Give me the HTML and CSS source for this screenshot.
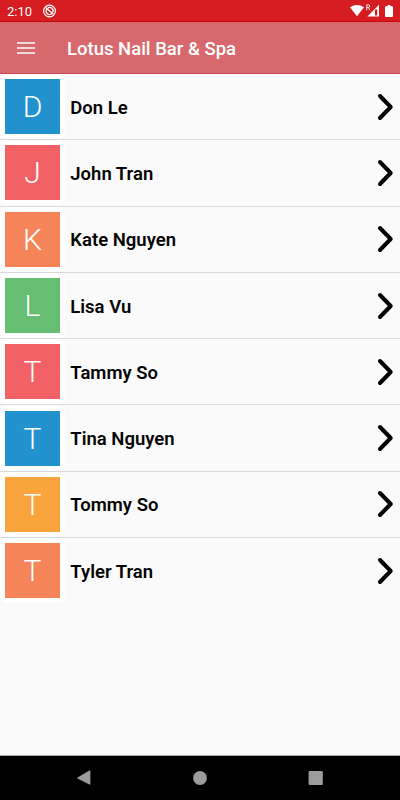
FILE: index.html
```html
<!DOCTYPE html>
<html lang="en">
<head>
<meta charset="utf-8">
<title>Lotus Nail Bar &amp; Spa</title>
<link rel="stylesheet" href="styles.css">
</head>
<body>
<div class="screen">
  <div class="status">
    <span class="time">2:10</span>
    <svg class="dnd" width="14" height="14" viewBox="0 0 14 14" fill="none" stroke="#fff">
      <circle cx="6.5" cy="7" r="5.9" stroke-width="1.2"/>
      <path d="M4 5A3.3 3.3 0 1 0 9 9.3M4.6 4.4A3.2 3.2 0 0 1 9.4 8.6" stroke-width="1.3"/>
      <path d="M2.6 3.4 10.4 10.2" stroke-width="1.3"/>
    </svg>
    <svg class="signals" width="44" height="16" viewBox="0 0 44 16" fill="#fff">
      <path d="M0 3.2Q7 -1.2 14 3.2L7 12.2Z"/>
      <path d="M16.8 6.2V.8H18.4Q19.7 .8 19.7 2.1T18.4 3.4H16.8M18.3 3.4 19.8 6.2" fill="none" stroke="#fff" stroke-width=".9"/>
      <path d="M29 .8V12.4H17.4Z"/>
      <path d="M25 5.4H26.1V11.4H25ZM26.1 5.4H27.2V11.4H26.1Z" fill="#d31b20"/>
      <path d="M37.5 1H40.5V2.2H42Q43 2.2 43 3.2V12Q43 13 42 13H36Q35 13 35 12V3.2Q35 2.2 36 2.2H37.5Z"/>
    </svg>
  </div>
  <header class="appbar">
    <svg class="menu" width="18" height="12" viewBox="0 0 18 12" stroke="#fff" stroke-width="1.6"><path d="M0 1H18M0 6H18M0 11H18"/></svg>
    <h1 class="title">Lotus Nail Bar &amp; Spa</h1>
  </header>
  <ul class="list">
    <li class="row"><span class="frame"><b class="tile blue">D</b></span><span class="name">Don Le</span><svg class="chev" viewBox="0 0 18 28"><path d="M4 3 14.7 14 4 25"/></svg></li>
    <li class="row"><span class="frame"><b class="tile red">J</b></span><span class="name">John Tran</span><svg class="chev" viewBox="0 0 18 28"><path d="M4 3 14.7 14 4 25"/></svg></li>
    <li class="row"><span class="frame"><b class="tile coral">K</b></span><span class="name">Kate Nguyen</span><svg class="chev" viewBox="0 0 18 28"><path d="M4 3 14.7 14 4 25"/></svg></li>
    <li class="row"><span class="frame"><b class="tile green">L</b></span><span class="name">Lisa Vu</span><svg class="chev" viewBox="0 0 18 28"><path d="M4 3 14.7 14 4 25"/></svg></li>
    <li class="row"><span class="frame"><b class="tile red">T</b></span><span class="name">Tammy So</span><svg class="chev" viewBox="0 0 18 28"><path d="M4 3 14.7 14 4 25"/></svg></li>
    <li class="row"><span class="frame"><b class="tile blue">T</b></span><span class="name">Tina Nguyen</span><svg class="chev" viewBox="0 0 18 28"><path d="M4 3 14.7 14 4 25"/></svg></li>
    <li class="row"><span class="frame"><b class="tile amber">T</b></span><span class="name">Tommy So</span><svg class="chev" viewBox="0 0 18 28"><path d="M4 3 14.7 14 4 25"/></svg></li>
    <li class="row"><span class="frame"><b class="tile coral">T</b></span><span class="name">Tyler Tran</span><svg class="chev" viewBox="0 0 18 28"><path d="M4 3 14.7 14 4 25"/></svg></li>
  </ul>
  <nav class="navbar">
    <svg width="16" height="16" viewBox="0 0 16 16"><path d="M.6 7.4 12.4 .6Q13.4 .2 13.4 1.2V14Q13.4 15 12.4 14.5L.6 8.4Q-.1 7.9 .6 7.4Z"/></svg>
    <svg width="16" height="16" viewBox="0 0 16 16"><circle cx="8" cy="8" r="6.9"/></svg>
    <svg width="16" height="16" viewBox="0 0 16 16"><rect x=".6" y="1" width="14.2" height="14" rx="1.2"/></svg>
  </nav>
</div>
</body>
</html>
```
FILE: styles.css
```css
* { box-sizing: border-box; }
body { margin: 0; font-family: Roboto, sans-serif; background: #fafafa; }
.screen { width: 400px; height: 800px; display: flex; flex-direction: column; overflow: hidden; }
.status { height: 22px; flex: none; background: #d51c20; border-bottom: 1px solid #c8060d; display: flex; align-items: flex-start; padding: 4px 6px 0 7px; color: #fff; }
.time { font-size: 13px; line-height: 15px; width: 36px; }
.signals { margin-left: auto; }
.appbar { height: 52px; flex: none; background: #d7696e; border-bottom: 1px solid #c94850; display: flex; align-items: center; padding: 1px 0 0 17px; color: #fff; }
.menu { margin-top: -1px; }
.title { margin: 1px 0 0 32px; font-size: 18.5px; line-height: 24px; font-weight: 500; }
.list { flex: 1; margin: 0; padding: 0; list-style: none; }
.row { height: 66.3px; display: flex; align-items: center; padding: 0 6px 0 0; border-bottom: 1px solid #d9d9d9; }
.row:last-child { border-bottom-color: transparent; }
.frame { width: 65px; height: 65px; flex: none; padding: 5px; border-radius: 7px; background: #fff; }
.tile { display: flex; align-items: center; justify-content: center; width: 55px; height: 55px; color: #fff; font-size: 30px; font-weight: 300; line-height: 34px; padding-top: 1px; }
.blue { background: #2292cf; }
.red { background: #f26166; }
.coral { background: #f58559; }
.green { background: #66be72; }
.amber { background: #faa43e; }
.name { flex: 1; padding: 2px 0 0 5.3px; font-size: 18.5px; font-weight: 600; line-height: 24px; color: #050505; }
.chev { width: 18px; height: 28px; fill: none; stroke: #000; stroke-width: 4; stroke-linecap: round; stroke-linejoin: round; }
.navbar { height: 45px; flex: none; background: #000; border-top: 1px solid #aaa; display: flex; justify-content: space-between; padding: 14px 76.5px 0; fill: #9c9c9c; }
```
